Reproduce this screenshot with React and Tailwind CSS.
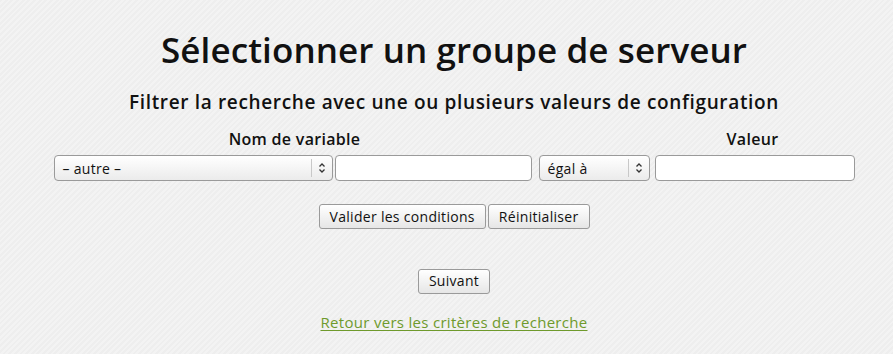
import React from "react";

const font = { fontFamily: "'Open Sans', Lato, sans-serif" };

const Chevrons = () => (
  <svg width="8" height="12" viewBox="0 0 8 12" fill="none" stroke="#333" strokeWidth="1.3">
    <path d="M1.5 4.5 L4 2 L6.5 4.5" />
    <path d="M1.5 7.5 L4 10 L6.5 7.5" />
  </svg>
);

const FakeSelect = ({ label, width }) => (
  <div
    className={`${width} h-[26px] flex items-center rounded-[4px] border border-[#9a9a9a] bg-gradient-to-b from-white to-[#ebebeb] text-[14px] tracking-[0.3px] text-[#111]`}
  >
    <span className="flex-1 pl-[8px] truncate">{label}</span>
    <div className="h-[18px] w-[21px] flex items-center justify-center border-l border-[#c8c8c8]">
      <Chevrons />
    </div>
  </div>
);

const TextInput = ({ width }) => (
  <input
    type="text"
    className={`${width} h-[26px] rounded-[4px] border border-[#9a9a9a] bg-white px-1 outline-none`}
  />
);

const Button = ({ children }) => (
  <button className="h-[25px] px-[10px] rounded-[3px] border border-[#9a9a9a] bg-gradient-to-b from-white to-[#e6e6e6] text-[14px] tracking-[0.3px] text-[#111] leading-none">
    {children}
  </button>
);

export default function App() {
  return (
    <div
      style={font}
      className="w-[893px] h-[354px] overflow-hidden bg-[repeating-linear-gradient(-45deg,#eeeeee_0px,#eeeeee_2px,#f3f3f3_2px,#f3f3f3_4px)] text-[#111] pl-[15px]"
    >
      <div className="flex flex-col items-center">
        <h1 className="mt-[28px] text-[35px] font-semibold leading-[44px] tracking-[0.1px]">
          Sélectionner un groupe de serveur
        </h1>
        <h2 className="mt-[18px] text-[19px] font-semibold leading-[24px] tracking-[0.65px]">
          Filtrer la recherche avec une ou plusieurs valeurs de configuration
        </h2>
        <div className="mt-[14px] flex flex-col">
          <div className="flex text-[16px] font-semibold leading-[22px] tracking-[0.3px]">
            <div className="w-[482px] text-center">Nom de variable</div>
            <div className="w-[116px]" />
            <div className="w-[202px] text-center">Valeur</div>
          </div>
          <div className="mt-[5px] flex items-center">
            <FakeSelect label="– autre –" width="w-[279px]" />
            <div className="ml-[2px]">
              <TextInput width="w-[197px]" />
            </div>
            <div className="ml-[7px]">
              <FakeSelect label="égal à" width="w-[111px]" />
            </div>
            <div className="ml-[5px]">
              <TextInput width="w-[200px]" />
            </div>
          </div>
        </div>
        <div className="mt-[23px] flex gap-[2px]">
          <Button>Valider les conditions</Button>
          <Button>Réinitialiser</Button>
        </div>
        <div className="mt-[39px]">
          <Button>Suivant</Button>
        </div>
        <a
          href="#"
          className="mt-[17px] text-[15px] tracking-[0.3px] text-[#6f9a2c] underline underline-offset-2"
        >
          Retour vers les critères de recherche
        </a>
      </div>
    </div>
  );
}
